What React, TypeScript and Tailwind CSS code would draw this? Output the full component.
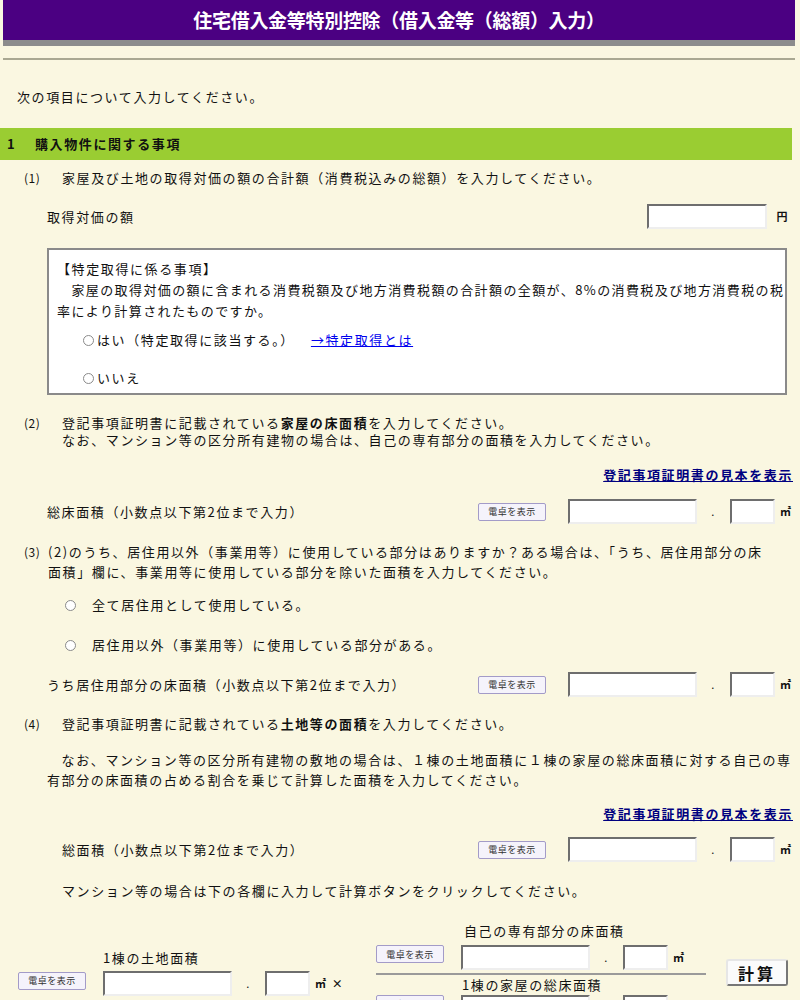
import React from "react";

const inputCls =
  "inline-block bg-white border-2 border-t-[#6e6e6e] border-l-[#6e6e6e] border-r-[#eeeeee] border-b-[#eeeeee]";

const SP = "\u3000";

const CalcButton = () => (
  <span className="inline-flex items-center justify-center w-[68px] h-[18px] bg-[#f5f3fb] border border-[#a39bc8] rounded-[2px] text-[9px] tracking-[0.5px] leading-none text-[#333]">
    電卓を表示
  </span>
);

const AreaInputs = ({ suffix = "㎡" }: { suffix?: string }) => (
  <div className="flex items-center">
    <span className={`${inputCls} w-[129px] h-[25px]`} />
    <span className="w-[33px] text-center text-[11px]">.</span>
    <span className={`${inputCls} w-[45px] h-[25px]`} />
    <span className="ml-[5px] text-[11px] font-bold whitespace-nowrap">{suffix}</span>
  </div>
);

const Radio = () => (
  <span className="inline-block w-[11px] h-[11px] rounded-full border border-[#8a8a8a] bg-white align-middle" />
);

const SampleLink = () => (
  <div className="flex justify-end pr-[7px] leading-[20px]">
    <span className="font-bold text-[#000080] underline">登記事項証明書の見本を表示</span>
  </div>
);

const Num = ({ n, w }: { n: string; w: string }) => (
  <span className={`pl-[24px] ${w} shrink-0 tracking-[0.5px] text-[12px]`}>{n}</span>
);

const AreaRow = ({ label, pl }: { label: string; pl: string }) => (
  <div className="flex items-center h-[25px]">
    <div className={`w-[478px] whitespace-nowrap ${pl}`}>{label}</div>
    <CalcButton />
    <div className="ml-[22px]">
      <AreaInputs />
    </div>
  </div>
);

export default function App() {
  return (
    <div className="w-[800px] h-[1000px] overflow-hidden bg-[#faf7e1] text-[#111] text-[13px] tracking-[1.6px] font-['Noto_Sans_CJK_JP','Noto_Sans',sans-serif]">
      {/* Title */}
      <div className="ml-[3px] mr-[5px]">
        <div className="h-[40px] bg-[#4b0082] flex items-center justify-center">
          <h1 className="text-white font-bold text-[19px] tracking-[-0.3px]">
            住宅借入金等特別控除（借入金等（総額）入力）
          </h1>
        </div>
        <div className="h-[6px] bg-[#8c8c8c]" />
        <div className="mt-[12px] h-[2px] bg-[#a9a892]" />
      </div>

      <p className="mt-[27px] pl-[17px] leading-[20px]">次の項目について入力してください。</p>

      {/* Section 1 */}
      <div className="mt-[21px] mr-[8px] h-[32px] bg-[#9acd32] flex items-center font-bold">
        <span className="pl-[7px] w-[35px]">1</span>
        <span>購入物件に関する事項</span>
      </div>

      {/* (1) */}
      <div className="mt-[8px] flex leading-[20px] whitespace-nowrap">
        <Num n="(1)" w="w-[62px]" />
        <span>家屋及び土地の取得対価の額の合計額（消費税込みの総額）を入力してください。</span>
      </div>

      <div className="mt-[16px] flex items-center h-[25px] pr-[11px]">
        <span className="pl-[47px]">取得対価の額</span>
        <span className={`${inputCls} ml-auto w-[120px] h-[25px]`} />
        <span className="ml-[9px] text-[11px] font-bold">円</span>
      </div>

      <div className="mt-[19px] ml-[47px] mr-[13px] h-[147px] bg-white border-2 border-[#8a8a8a] pl-[8px] pt-[8px] whitespace-nowrap">
        <p className="leading-[21px]">【特定取得に係る事項】</p>
        <p className="leading-[21px] tracking-[1.4px]">
          {SP}家屋の取得対価の額に含まれる消費税額及び地方消費税額の合計額の全額が、8%の消費税及び地方消費税の税
          <br />
          率により計算されたものですか。
        </p>
        <div className="mt-[9px] pl-[26px] flex items-center leading-[20px]">
          <Radio />
          <span className="ml-[3px]">はい（特定取得に該当する。）</span>
          <span className="ml-[16px] text-[#0000ee] underline">→特定取得とは</span>
        </div>
        <div className="mt-[18px] pl-[26px] flex items-center leading-[20px]">
          <Radio />
          <span className="ml-[3px]">いいえ</span>
        </div>
      </div>

      {/* (2) */}
      <div className="mt-[19px] flex leading-[17px] whitespace-nowrap">
        <Num n="(2)" w="w-[62px]" />
        <div>
          登記事項証明書に記載されている<b>家屋の床面積</b>を入力してください。
          <br />
          なお、マンション等の区分所有建物の場合は、自己の専有部分の面積を入力してください。
        </div>
      </div>

      <div className="mt-[17px]">
        <SampleLink />
      </div>

      <div className="mt-[14px]">
        <AreaRow label="総床面積（小数点以下第2位まで入力）" pl="pl-[47px]" />
      </div>

      {/* (3) */}
      <div className="mt-[18px] flex leading-[20px] whitespace-nowrap">
        <Num n="(3)" w="w-[48px]" />
        <div>
          (2)のうち、居住用以外（事業用等）に使用している部分はありますか？ある場合は、「うち、居住用部分の床
          <br />
          面積」欄に、事業用等に使用している部分を除いた面積を入力してください。
        </div>
      </div>

      <div className="mt-[13px] pl-[65px] flex items-center leading-[20px]">
        <Radio />
        <span className="ml-[16px]">全て居住用として使用している。</span>
      </div>
      <div className="mt-[20px] pl-[65px] flex items-center leading-[20px]">
        <Radio />
        <span className="ml-[16px]">居住用以外（事業用等）に使用している部分がある。</span>
      </div>

      <div className="mt-[17px]">
        <AreaRow label="うち居住用部分の床面積（小数点以下第2位まで入力）" pl="pl-[47px]" />
      </div>

      {/* (4) */}
      <div className="mt-[17px] flex leading-[20px] whitespace-nowrap">
        <Num n="(4)" w="w-[62px]" />
        <span>
          登記事項証明書に記載されている<b>土地等の面積</b>を入力してください。
        </span>
      </div>

      <p className="mt-[16px] pl-[47px] leading-[20px] whitespace-nowrap">
        {SP}なお、マンション等の区分所有建物の敷地の場合は、１棟の土地面積に１棟の家屋の総床面積に対する自己の専
        <br />
        有部分の床面積の占める割合を乗じて計算した面積を入力してください。
      </p>

      <div className="mt-[14px]">
        <SampleLink />
      </div>

      <div className="mt-[13px]">
        <AreaRow label="総面積（小数点以下第2位まで入力）" pl="pl-[62px]" />
      </div>

      <p className="mt-[19px] pl-[62px] leading-[20px] whitespace-nowrap">
        マンション等の場合は下の各欄に入力して計算ボタンをクリックしてください。
      </p>

      {/* Calculation area */}
      <div className="mt-[20px] flex items-start">
        <div className="w-[376px] pl-[18px] pt-[28px]">
          <div className="pl-[85px] leading-[18px] whitespace-nowrap">1棟の土地面積</div>
          <div className="mt-[4px] flex items-start">
            <div className="-mt-[2px]">
              <CalcButton />
            </div>
            <div className="ml-[17px]">
              <AreaInputs suffix="㎡ ×" />
            </div>
          </div>
        </div>

        <div className="w-[330px] pt-[1px]">
          <div className="pl-[88px] leading-[18px] whitespace-nowrap">自己の専有部分の床面積</div>
          <div className="mt-[5px] flex items-start">
            <CalcButton />
            <div className="ml-[17px]">
              <AreaInputs />
            </div>
          </div>
          <div className="mt-[3px] h-[2px] bg-[#9a9a9a]" />
          <div className="mt-[1px] pl-[86px] leading-[18px] whitespace-nowrap">1棟の家屋の総床面積</div>
          <div className="mt-[1px] flex items-start">
            <CalcButton />
            <div className="ml-[17px]">
              <AreaInputs />
            </div>
          </div>
        </div>

        <div className="ml-[20px] mt-[38px]">
          <span className="inline-flex items-center justify-center w-[62px] h-[27px] bg-[#fbfbfb] border-2 border-t-[#e6e6e6] border-l-[#e6e6e6] border-r-[#777] border-b-[#777] rounded-[3px] text-[16px] tracking-[3px] font-bold">
            計算
          </span>
        </div>
      </div>
    </div>
  );
}
